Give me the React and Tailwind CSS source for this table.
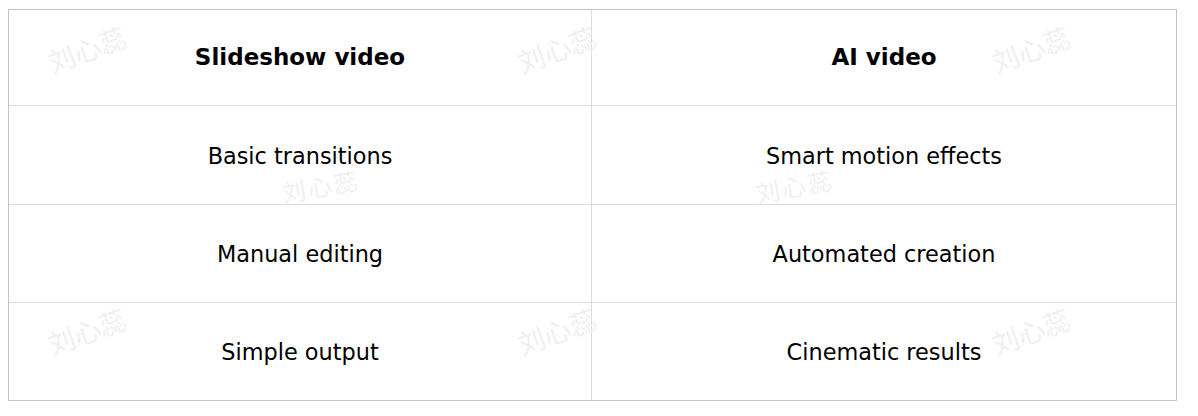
import React from "react";

const rows = [
  ["Basic transitions", "Smart motion effects", "h-[99px]"],
  ["Manual editing", "Automated creation", "h-[98px]"],
  ["Simple output", "Cinematic results", "h-[97px]"],
];

const bigMarks = [
  [44, 50],
  [514, 50],
  [988, 50],
  [44, 332],
  [514, 332],
  [988, 332],
];

const midMarks = [
  [280, 181],
  [754, 181],
];

export default function App() {
  return (
    <div className="relative w-[1198px] h-[416px] bg-white overflow-hidden" style={{ fontFamily: '"DejaVu Sans", sans-serif' }}>
      <div className="pt-[9px] pl-[8px]">
        <div className="w-[1169px] border border-[#c4c4c4] grid grid-cols-[583px_1fr] text-[22.4px] leading-[1.1] text-black">
          <div className="h-[96px] flex items-center justify-center font-bold text-[23px] border-r border-b border-[#dcdcdc]">Slideshow video</div>
          <div className="h-[96px] flex items-center justify-center font-bold text-[23px] border-b border-[#dcdcdc]">AI video</div>
          {rows.map((r, i) => (
            <React.Fragment key={i}>
              <div className={`${r[2]} flex items-center justify-center pt-[2px] border-r border-[#dcdcdc] ${i < 2 ? "border-b" : ""}`}>{r[0]}</div>
              <div className={`${r[2]} flex items-center justify-center pt-[2px] border-[#dcdcdc] ${i < 2 ? "border-b" : ""}`}>{r[1]}</div>
            </React.Fragment>
          ))}
        </div>
      </div>
      {bigMarks.map(([x, y], i) => (
        <div
          key={"b" + i}
          className="absolute text-[27px] leading-none text-[#f0f0f0] -rotate-[20deg] origin-top-left pointer-events-none select-none"
          style={{ left: x, top: y, fontFamily: '"Noto Sans CJK SC", sans-serif' }}
        >
          刘心蕊
        </div>
      ))}
      {midMarks.map(([x, y], i) => (
        <div
          key={"m" + i}
          className="absolute text-[24px] leading-none tracking-[2px] text-[#f0f0f0] -rotate-[10deg] origin-top-left pointer-events-none select-none"
          style={{ left: x, top: y, fontFamily: '"Noto Sans CJK SC", sans-serif' }}
        >
          刘心蕊
        </div>
      ))}
    </div>
  );
}
